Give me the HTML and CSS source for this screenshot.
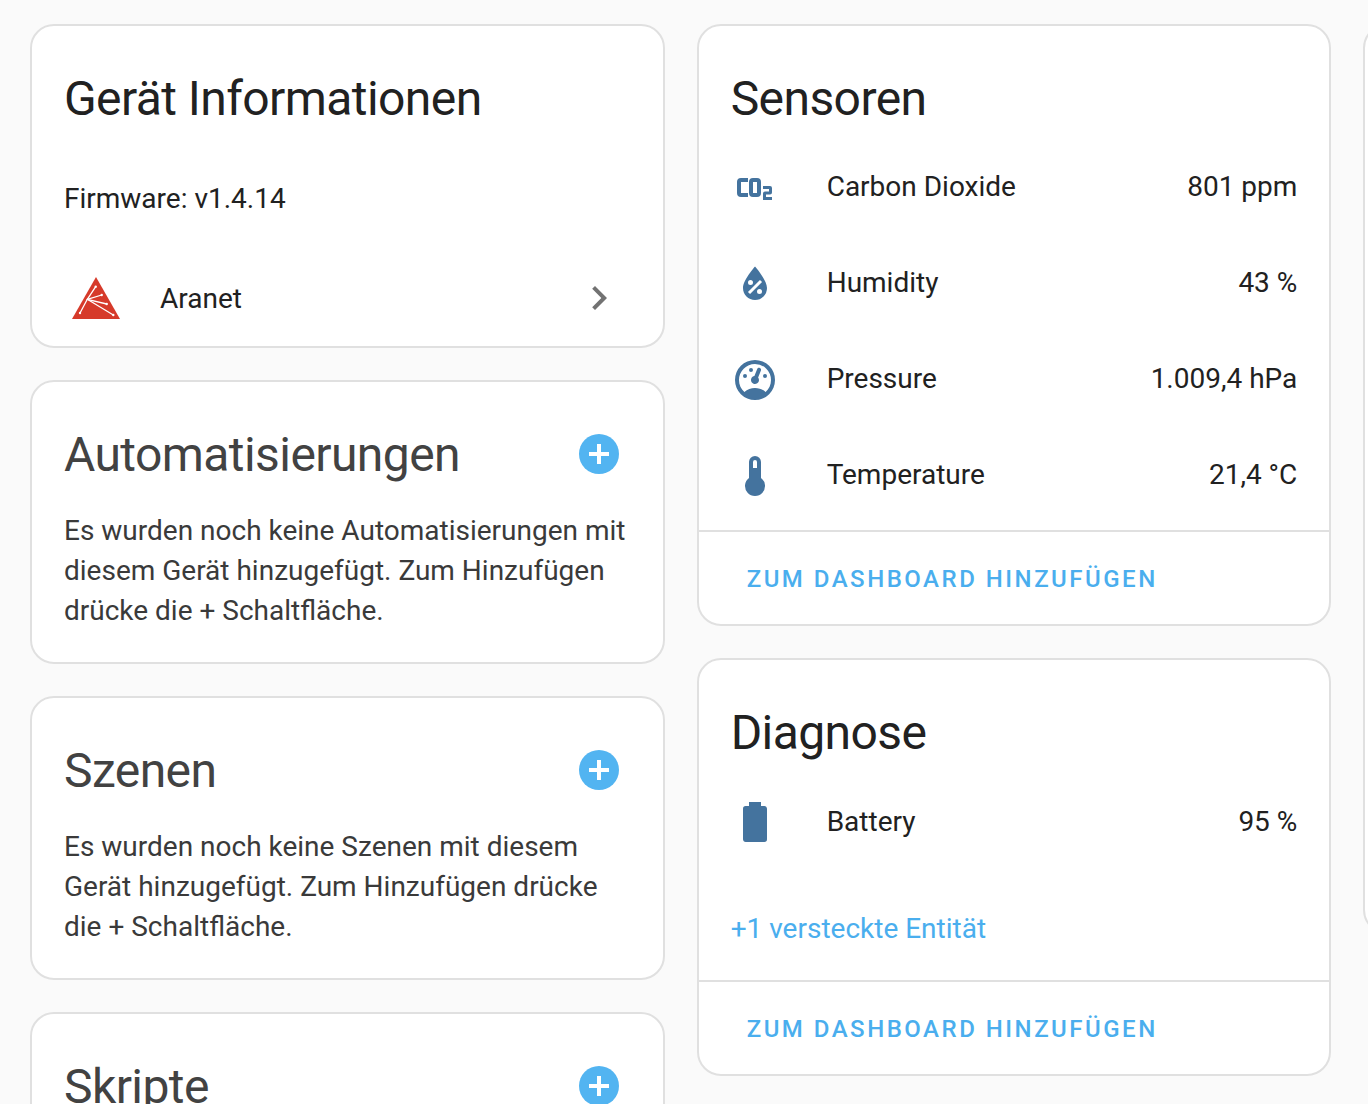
FILE: index.html
```html
<!DOCTYPE html>
<html lang="de">
<head>
    <meta charset="UTF-8">
    <meta name="viewport" content="width=device-width, initial-scale=1.0">
    <title>Gerät</title>
    <link rel="stylesheet" href="styles.css">
</head>
<body>
<div class="columns">
    <div class="column">
        <div class="card info-card">
            <h1 class="card-title">Gerät Informationen</h1>
            <p class="firmware">Firmware: v1.4.14</p>
            <div class="device-row">
                <svg class="logo" viewBox="0 0 48 42">
                    <polygon points="24,0 48,42 0,42" fill="#d63a2a"/>
                    <g stroke="#fff" stroke-width="1.3" stroke-linecap="round" fill="none">
                        <path d="M23.7 9.7 L15.3 22.3 L8 36"/>
                        <path d="M15.3 22.3 L29.7 18"/>
                        <path d="M15.3 22.3 L34.7 27"/>
                        <path d="M15.3 22.3 L41.3 38"/>
                    </g>
                    <g fill="#fff">
                        <circle cx="23.7" cy="9.7" r="1.2"/>
                        <circle cx="8" cy="36" r="1.2"/>
                        <circle cx="29.7" cy="18" r="1.2"/>
                        <circle cx="34.7" cy="27" r="1.2"/>
                        <circle cx="41.3" cy="38" r="1.2"/>
                    </g>
                </svg>
                <span class="device-name">Aranet</span>
                <svg class="chevron" viewBox="0 0 24 24"><path d="M8.59,16.58L13.17,12L8.59,7.41L10,6L16,12L10,18L8.59,16.58Z"/></svg>
            </div>
        </div>

        <div class="card text-card">
            <div class="title-row">
                <h1 class="card-title muted">Automatisierungen</h1>
                <span class="add-btn"></span>
            </div>
            <p class="card-text">Es wurden noch keine Automatisierungen mit diesem Gerät hinzugefügt. Zum Hinzufügen drücke die + Schaltfläche.</p>
        </div>

        <div class="card text-card">
            <div class="title-row">
                <h1 class="card-title muted">Szenen</h1>
                <span class="add-btn"></span>
            </div>
            <p class="card-text">Es wurden noch keine Szenen mit diesem Gerät hinzugefügt. Zum Hinzufügen drücke die + Schaltfläche.</p>
        </div>

        <div class="card text-card">
            <div class="title-row">
                <h1 class="card-title muted">Skripte</h1>
                <span class="add-btn"></span>
            </div>
        </div>
    </div>

    <div class="column">
        <div class="card sensor-card">
            <h1 class="card-title entities-title">Sensoren</h1>
            <div class="entity-list">
                <div class="entity">
                    <svg class="entity-icon" viewBox="0 0 24 24"><path transform="translate(0,-0.5)" d="M5,7.5A2,2 0 0,0 3,9.5V15A2,2 0 0,0 5,17H8.5V15H5V9.5H8.5V7.5H5M11,7.5A2,2 0 0,0 9,9.5V15A2,2 0 0,0 11,17H13A2,2 0 0,0 15,15V9.5A2,2 0 0,0 13,7.5H11M11,9.5H13V15H11V9.5M16,11.5V13H19V14.25H17A1,1 0 0,0 16,15.25V18.5H20.5V17H17.5V15.75H19.5A1,1 0 0,0 20.5,14.75V12.5A1,1 0 0,0 19.5,11.5H16Z"/></svg>
                    <span class="entity-name">Carbon Dioxide</span>
                    <span class="entity-value">801 ppm</span>
                </div>
                <div class="entity">
                    <svg class="entity-icon" viewBox="0 0 24 24"><path d="M12,3.25C12,3.25 6,10 6,14C6,17.32 8.69,20 12,20A6,6 0 0,0 18,14C18,10 12,3.25 12,3.25M14.47,9.97L15.53,11.03L9.53,17.03L8.47,15.97M9.75,10A1.25,1.25 0 0,1 11,11.25A1.25,1.25 0 0,1 9.75,12.5A1.25,1.25 0 0,1 8.5,11.25A1.25,1.25 0 0,1 9.75,10M14.25,14.5A1.25,1.25 0 0,1 15.5,15.75A1.25,1.25 0 0,1 14.25,17A1.25,1.25 0 0,1 13,15.75A1.25,1.25 0 0,1 14.25,14.5Z"/></svg>
                    <span class="entity-name">Humidity</span>
                    <span class="entity-value">43 %</span>
                </div>
                <div class="entity">
                    <svg class="entity-icon" viewBox="0 0 24 24"><path d="M12,2A10,10 0 0,0 2,12A10,10 0 0,0 12,22A10,10 0 0,0 22,12A10,10 0 0,0 12,2M12,4A8,8 0 0,1 20,12C20,14.4 19,16.5 17.3,18C15.9,16.7 14,16 12,16C10,16 8.2,16.7 6.7,18C5,16.5 4,14.4 4,12A8,8 0 0,1 12,4M14,5.89C13.62,5.9 13.26,6.15 13.1,6.54L11.81,9.77L11.71,10C11,10.13 10.41,10.6 10.14,11.26C9.73,12.29 10.23,13.45 11.26,13.86C12.29,14.27 13.45,13.77 13.86,12.74C14.12,12.08 14,11.32 13.57,10.76L13.67,10.5L14.96,7.29L14.97,7.26C15.17,6.75 14.92,6.17 14.41,5.96C14.28,5.91 14.15,5.89 14,5.89M10,6A1,1 0 0,0 9,7A1,1 0 0,0 10,8A1,1 0 0,0 11,7A1,1 0 0,0 10,6M7,9A1,1 0 0,0 6,10A1,1 0 0,0 7,11A1,1 0 0,0 8,10A1,1 0 0,0 7,9M17,9A1,1 0 0,0 16,10A1,1 0 0,0 17,11A1,1 0 0,0 18,10A1,1 0 0,0 17,9Z"/></svg>
                    <span class="entity-name">Pressure</span>
                    <span class="entity-value">1.009,4 hPa</span>
                </div>
                <div class="entity">
                    <svg class="entity-icon" viewBox="0 0 24 24"><path d="M15 13V5A3 3 0 0 0 9 5V13A5 5 0 1 0 15 13M12 4A1 1 0 0 1 13 5V8H11V5A1 1 0 0 1 12 4Z"/></svg>
                    <span class="entity-name">Temperature</span>
                    <span class="entity-value">21,4 °C</span>
                </div>
            </div>
            <div class="card-actions"><a class="action-link">ZUM DASHBOARD HINZUFÜGEN</a></div>
        </div>

        <div class="card">
            <h1 class="card-title entities-title">Diagnose</h1>
            <div class="entity-list">
                <div class="entity">
                    <svg class="entity-icon" viewBox="0 0 24 24"><path d="M16.67,4H15V2H9V4H7.33A1.33,1.33 0 0,0 6,5.33V20.67C6,21.4 6.6,22 7.33,22H16.67A1.33,1.33 0 0,0 18,20.67V5.33C18,4.6 17.4,4 16.67,4Z"/></svg>
                    <span class="entity-name">Battery</span>
                    <span class="entity-value">95 %</span>
                </div>
            </div>
            <div class="hidden-entities">+1 versteckte Entität</div>
            <div class="card-actions"><a class="action-link">ZUM DASHBOARD HINZUFÜGEN</a></div>
        </div>
    </div>

    <div class="column">
        <div class="card edge-card"></div>
    </div>
</div>
</body>
</html>
```

FILE: styles.css
```css
html, body {
    margin: 0;
    padding: 0;
    height: 1104px;
    overflow: hidden;
}
body {
    font-family: Roboto, sans-serif;
    background: #fafafa;
    color: #212121;
}
.columns {
    display: flex;
    gap: 32px;
    padding: 24px 0 0 30px;
}
.column {
    flex: 0 0 634.67px;
    display: flex;
    flex-direction: column;
    gap: 32px;
}
.card {
    background: #fff;
    border: 2px solid #e0e0e0;
    border-radius: 24px;
}
.card-title {
    margin: 0;
    font-size: 48px;
    font-weight: 400;
    line-height: 64px;
    letter-spacing: -0.576px;
}
.muted {
    color: #424242;
    padding-top: 1px;
}

.info-card {
    height: 320px;
    padding: 0 32px;
}
.info-card .card-title {
    padding-top: 41px;
}
.firmware {
    margin: 48px 0 0;
    font-size: 28px;
    line-height: 40px;
}
.device-row {
    display: flex;
    align-items: center;
    margin-top: 55px;
}
.logo {
    width: 48px;
    height: 42px;
    margin-left: 8px;
}
.device-name {
    flex: 1;
    margin-left: 40px;
    font-size: 28px;
}
.chevron {
    width: 48px;
    height: 48px;
    fill: #727272;
    margin-right: 8px;
}

.text-card {
    height: 280px;
    padding: 0 32px;
}
.title-row {
    display: flex;
    justify-content: space-between;
    align-items: flex-start;
    padding: 40px 12px 0 0;
}
.add-btn {
    width: 40px;
    height: 40px;
    margin-top: 12px;
    border-radius: 50%;
    background:
        linear-gradient(#fff, #fff) center / 20px 4px no-repeat,
        linear-gradient(#fff, #fff) center / 4px 20px no-repeat,
        #52b4f1;
}
.card-text {
    margin: 24px 0 0;
    font-size: 28px;
    line-height: 40px;
    color: #3a3a3a;
}

.entities-title {
    padding: 41px 32px 0;
}
.entity-list {
    padding: 16px 32px 0;
}
.entity {
    display: flex;
    align-items: center;
    height: 80px;
    margin-bottom: 16px;
    font-size: 28px;
}
.entity-icon {
    flex: none;
    width: 48px;
    height: 48px;
    margin-top: 2px;
    fill: #44739e;
}
.entity-name {
    flex: 1;
    margin-left: 48px;
}
.entity-value {
    white-space: nowrap;
}
.sensor-card .entity-name,
.sensor-card .entity-value {
    margin-top: -2px;
}
.hidden-entities {
    padding: 32px 32px 0;
    font-size: 28px;
    line-height: 40px;
    color: #4aaeee;
}
.card-actions {
    border-top: 2px solid #e0e0e0;
    padding: 31px 48px 29px;
    margin-top: -1px;
}
.hidden-entities + .card-actions {
    margin-top: 31px;
}
.action-link {
    display: block;
    font-size: 24px;
    font-weight: 500;
    line-height: 32px;
    letter-spacing: 2.5px;
    color: #4aaeee;
}
.edge-card {
    height: 906px;
}
```
